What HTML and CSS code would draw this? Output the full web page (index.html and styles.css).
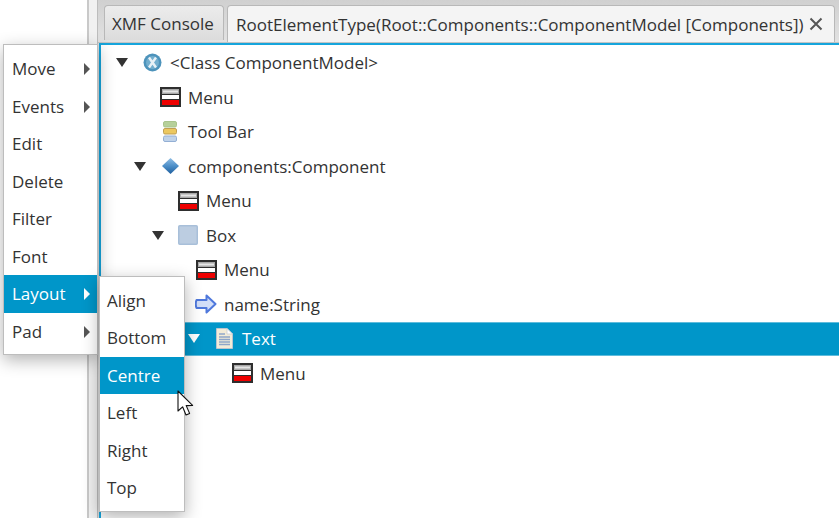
FILE: index.html
```html
<!DOCTYPE html>
<html lang="en">
<head>
    <meta charset="UTF-8">
    <title>XMF Diagram Menu</title>
    <link rel="stylesheet" href="styles.css">
</head>
<body>
    <svg class="defs" width="0" height="0">
        <defs>
            <symbol id="i-menu" viewBox="0 0 21 20">
                <rect x="0" y="0" width="21" height="20" fill="#2e2e2e"/>
                <rect x="2" y="2" width="17" height="5" fill="#a8a8a8"/>
                <rect x="3" y="3.5" width="15" height="2" fill="#e6e6e6"/>
                <rect x="2" y="8" width="17" height="4" fill="#fff"/>
                <rect x="2" y="13" width="17" height="5" fill="#ee0000"/>
            </symbol>
        </defs>
    </svg>

    <div class="left-panel"></div>
    <div class="splitter"></div>

    <div class="tab-pane">
        <div class="tab-header">
            <div class="tab">XMF Console</div>
            <div class="tab tab-active">
                <span>RootElementType(Root::Components::ComponentModel [Components])</span>
                <svg class="tab-close" width="14" height="14" viewBox="0 0 14 14"><path d="M1.5 1.5 L12.5 12.5 M12.5 1.5 L1.5 12.5" stroke="#555" stroke-width="2" fill="none"/></svg>
            </div>
        </div>
        <div class="tab-content">
            <div class="row d0">
                <span class="twist"></span>
                <span class="cell"><svg width="19" height="19" viewBox="0 0 19 19"><circle cx="9.5" cy="9.5" r="9" fill="#4d93bb"/><circle cx="9.5" cy="9.5" r="6.5" fill="#72aece"/><path d="M6 4.5 L13 14.5 M13 4.5 L6 14.5" stroke="#e8f1f6" stroke-width="2.4" fill="none"/></svg></span>
                <span>&lt;Class ComponentModel&gt;</span>
            </div>
            <div class="row d1">
                <span class="leaf"></span>
                <span class="cell"><svg width="21" height="20"><use href="#i-menu"/></svg></span>
                <span>Menu</span>
            </div>
            <div class="row d1">
                <span class="leaf"></span>
                <span class="cell"><svg width="14" height="21" viewBox="0 0 14 21"><rect x="0.5" y="0.5" width="13" height="5.5" rx="1.5" fill="#b6d09a" stroke="#a9c48c"/><rect x="0.5" y="7.5" width="13" height="5.5" rx="1.5" fill="#ecc860" stroke="#bf9f55"/><rect x="0.5" y="15" width="13" height="5.5" rx="1.5" fill="#c0d3ea" stroke="#93afd4"/></svg></span>
                <span>Tool Bar</span>
            </div>
            <div class="row d1">
                <span class="twist"></span>
                <span class="cell"><svg width="17" height="16" viewBox="0 0 17 16"><defs><linearGradient id="dia" x1="0" y1="0" x2="0" y2="1"><stop offset="0" stop-color="#8fbde4"/><stop offset="0.5" stop-color="#4d8fc8"/><stop offset="1" stop-color="#1f5f9e"/></linearGradient></defs><path d="M8.5 0 L17 8 L8.5 16 L0 8 Z" fill="url(#dia)"/></svg></span>
                <span>components:Component</span>
            </div>
            <div class="row d2">
                <span class="leaf"></span>
                <span class="cell"><svg width="21" height="20"><use href="#i-menu"/></svg></span>
                <span>Menu</span>
            </div>
            <div class="row d2">
                <span class="twist"></span>
                <span class="cell"><svg width="20" height="20" viewBox="0 0 20 20"><rect x="0.75" y="0.75" width="18.5" height="18.5" rx="1" fill="#bccde1" stroke="#a8bfd9" stroke-width="1.5"/></svg></span>
                <span>Box</span>
            </div>
            <div class="row d3">
                <span class="leaf"></span>
                <span class="cell"><svg width="21" height="20"><use href="#i-menu"/></svg></span>
                <span>Menu</span>
            </div>
            <div class="row d3">
                <span class="leaf"></span>
                <span class="cell"><svg width="22" height="20" viewBox="0 0 22 20"><path d="M1.5 6 H11.5 V1.5 L20.5 10 L11.5 18.5 V14 H1.5 Q0 10 1.5 6 Z" fill="#d2def8" stroke="#4f78dc" stroke-width="2" stroke-linejoin="round"/></svg></span>
                <span>name:String</span>
            </div>
            <div class="row d4 row-selected">
                <span class="twist"></span>
                <span class="cell"><svg width="19" height="21" viewBox="0 0 19 21"><path d="M1.5 0.5 H12 L17.5 6 V20.5 H1.5 Z" fill="#f2ecd8" stroke="#b9c4cf"/><path d="M12 0.5 V6 H17.5 Z" fill="#fff" stroke="#c9ced4" stroke-width="0.8"/><path d="M4 6 H10 M4 9 H15 M4 11.5 H15 M4 14 H15 M4 16.5 H15" stroke="#8ea6c9" stroke-width="1.3"/></svg></span>
                <span>Text</span>
            </div>
            <div class="row d5">
                <span class="leaf"></span>
                <span class="cell"><svg width="21" height="20"><use href="#i-menu"/></svg></span>
                <span>Menu</span>
            </div>
        </div>
    </div>

    <div class="menu menu-main">
        <div class="item has-sub">Move</div>
        <div class="item has-sub">Events</div>
        <div class="item">Edit</div>
        <div class="item">Delete</div>
        <div class="item">Filter</div>
        <div class="item">Font</div>
        <div class="item has-sub item-active">Layout</div>
        <div class="item has-sub">Pad</div>
    </div>

    <div class="menu menu-sub">
        <div class="item">Align</div>
        <div class="item">Bottom</div>
        <div class="item item-active">Centre</div>
        <div class="item">Left</div>
        <div class="item">Right</div>
        <div class="item">Top</div>
    </div>

    <svg class="cursor" width="20" height="28" viewBox="0 0 20 28">
        <path d="M1 1 V21 L5.6 16.8 L9 25 L12.6 23.4 L9.2 15.6 L15.6 15.4 Z" fill="#fff" stroke="#111" stroke-width="1.1" stroke-linejoin="round"/>
    </svg>
</body>
</html>
```

FILE: styles.css
```css
html, body {
    height: 100%;
}
body {
    font-family: 'Open Sans', 'Noto Sans', sans-serif;
    font-size: 17px;
    color: #333;
    background-color: #fff;
    margin: 0;
    display: flex;
    overflow: hidden;
}
.defs {
    position: absolute;
}
.left-panel {
    width: 87px;
    flex: none;
}
.splitter {
    width: 8px;
    flex: none;
    background-color: #f1f1f1;
    border-left: 2px solid #c9c9c9;
    border-right: 1px solid #bdbdbd;
}
.tab-pane {
    flex: 1;
    min-width: 0;
    display: flex;
    flex-direction: column;
    background-color: #dcdcdc;
}
.tab-header {
    height: 43px;
    flex: none;
    display: flex;
    align-items: flex-end;
    gap: 3px;
    padding-left: 6px;
    background: linear-gradient(#d0d0d0, #e2e2e2);
    border-bottom: 1px solid #c4c4c4;
    box-sizing: border-box;
}
.tab {
    width: 120px;
    height: 35px;
    flex: none;
    padding: 0 8px 0 7px;
    display: flex;
    align-items: center;
    box-sizing: border-box;
    border: 1px solid #b8b8b8;
    border-bottom: none;
    border-radius: 4px 4px 0 0;
    background: linear-gradient(#ececec, #dcdcdc);
    margin-bottom: 2px;
    white-space: nowrap;
}
.tab-active {
    width: 608px;
    height: 37px;
    margin-bottom: 0;
    padding-left: 8px;
    gap: 5px;
    background: #f4f4f4;
}
.tab-close {
    flex: none;
}
.tab-content {
    flex: 1;
    background-color: #fff;
    border-top: 2px solid #16a5dc;
    border-left: 2px solid #16a5dc;
    margin-left: 1px;
    padding-top: 0.5px;
}
.row {
    height: 34.5px;
    display: flex;
    align-items: center;
    box-sizing: border-box;
    white-space: nowrap;
}
.d0 { padding-left: 15px; }
.d1 { padding-left: 33px; }
.d2 { padding-left: 51px; }
.d3 { padding-left: 69px; }
.d4 { padding-left: 87px; }
.d5 { padding-left: 105px; }
.twist,
.leaf {
    width: 18px;
    flex: none;
}
.twist::before {
    content: "";
    display: block;
    width: 0;
    height: 0;
    border-left: 6.5px solid transparent;
    border-right: 6.5px solid transparent;
    border-top: 9px solid #333;
}
.cell {
    width: 36px;
    flex: none;
    display: flex;
    justify-content: center;
    align-items: center;
}
.row-selected {
    background-color: #0096c9;
    color: #fff;
    border-top: 1px solid #5fbcdc;
    border-bottom: 1px solid #5fbcdc;
}
.row-selected .twist::before {
    border-top-color: #fff;
}
.menu {
    position: absolute;
    box-sizing: border-box;
    background-color: #fff;
    border: 1px solid #bdbdbd;
    padding: 5px 0 4px;
    box-shadow: 0 5px 16px rgba(0, 0, 0, 0.3);
}
.menu-main {
    left: 3px;
    top: 44px;
    width: 95px;
}
.menu-main .item {
    padding-left: 8px;
}
.menu-sub {
    left: 99px;
    top: 276px;
    width: 86px;
    padding-top: 4.5px;
}
.item {
    height: 37.5px;
    padding-left: 7px;
    display: flex;
    align-items: center;
    position: relative;
    box-sizing: border-box;
}
.item-active {
    background-color: #0096c9;
    color: #fff;
}
.has-sub::after {
    content: "";
    position: absolute;
    right: 7px;
    top: 13px;
    border-top: 6px solid transparent;
    border-bottom: 6px solid transparent;
    border-left: 6px solid #555;
}
.item-active.has-sub::after {
    border-left-color: #fff;
}
.cursor {
    position: absolute;
    left: 177px;
    top: 390px;
}
```
